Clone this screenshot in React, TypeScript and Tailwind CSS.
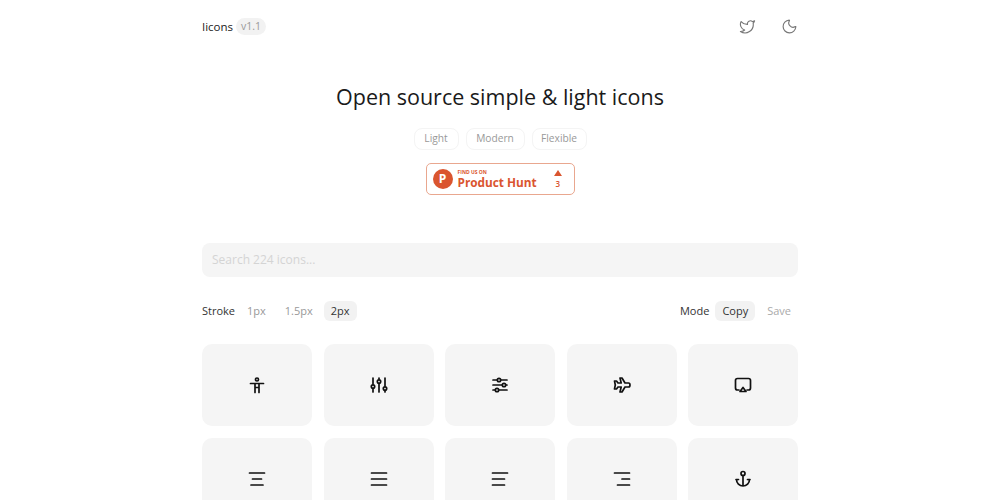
import { Moon, Twitter } from "lucide-react";
import type { ReactNode } from "react";

const icons: ReactNode[] = [
  <>
    <circle cx="12" cy="6.5" r="1.5" />
    <path d="M5.5 10.5h13M10 10.5V19.5M14 10.5V19.5M10 14.5h4" />
  </>,
  <>
    <path d="M6 5v6M6 16v3M12 5v1M12 11v8M18 5v8M18 18v1" />
    <circle cx="6" cy="13.5" r="1.7" />
    <circle cx="12" cy="8.5" r="1.7" />
    <circle cx="18" cy="15.5" r="1.7" />
  </>,
  <>
    <path d="M5 7h4M13 7h6M5 12h9M18 12h1M5 17h2M11 17h8" />
    <circle cx="11" cy="7" r="1.7" />
    <circle cx="16" cy="12" r="1.7" />
    <circle cx="9" cy="17" r="1.7" />
  </>,
  <path d="M10 5h2l3 5h3.5a1.5 2 0 0 1 0 4H15l-3 5h-2l1.2-5H8l-1.5 2H4.5l.8-4-.8-4h2L8 10h3.2z" />,
  <>
    <path d="M8 17H6.5A2 2 0 0 1 4.5 15V7.5a2 2 0 0 1 2-2h11a2 2 0 0 1 2 2V15a2 2 0 0 1-2 2H16" />
    <path d="M12 14.5l3 4H9z" />
  </>,
  <path d="M4.5 6h15M7.5 12h9M6 18h12" />,
  <path d="M4.5 6h15M4.5 12h15M4.5 18h15" />,
  <path d="M4.5 6h15M4.5 12h12M4.5 18h12" />,
  <path d="M4.5 6h15M12 12h7.5M7.5 18h12" />,
  <>
    <circle cx="12" cy="6.5" r="2" />
    <path d="M12 8.5V19M5 12.5H7.5M16.5 12.5H19M5.5 12.5a6.5 6.5 0 0 0 13 0" />
  </>,
];

function Pill({ w, children }: { w: string; children: ReactNode }) {
  return (
    <span className={`flex h-[22px] items-center justify-center rounded-lg border border-[#f4f4f4] text-[10.2px] text-[#999] ${w}`}>
      {children}
    </span>
  );
}

export default function App() {
  return (
    <div className="h-[500px] overflow-hidden bg-white font-['Open_Sans',sans-serif]">
      <div className="mx-auto flex w-[596px] flex-col">
        <header className="flex h-[53px] items-center justify-between">
          <div className="flex items-center gap-[3px]">
            <span className="text-[11.5px] text-[#222]">Iicons</span>
            <span className="rounded-full bg-[#f2f2f2] px-[5px] py-[1px] text-[10.5px] text-[#999]">v1.1</span>
          </div>
          <div className="flex items-center gap-[25px] text-[#777]">
            <Twitter size={17} strokeWidth={1.6} />
            <Moon size={17} strokeWidth={1.6} />
          </div>
        </header>

        <h1 className="mt-[29px] text-center text-[21.5px] leading-[30px] font-normal text-[#1a1a1a]">
          Open source simple &amp; light icons
        </h1>

        <div className="mt-[16px] flex justify-center gap-[7px]">
          <Pill w="w-[45px]">Light</Pill>
          <Pill w="w-[59px]">Modern</Pill>
          <Pill w="w-[55px]">Flexible</Pill>
        </div>

        <div className="mt-[13px] flex justify-center">
          <div className="flex h-[32px] w-[149px] items-center rounded-[5px] border border-[#e9a78f] pl-[6px] text-[#da552f]">
            <span className="flex h-[20px] w-[20px] items-center justify-center rounded-full bg-[#da552f] text-[12px] font-bold text-white">
              P
            </span>
            <div className="ml-[5px] flex flex-col leading-none">
              <span className="text-[5px] font-bold">FIND US ON</span>
              <span className="mt-[2px] text-[11.8px] font-bold">Product Hunt</span>
            </div>
            <div className="ml-[17px] flex flex-col items-center leading-none">
              <span className="h-0 w-0 border-x-[4px] border-b-[6px] border-x-transparent border-b-[#da552f]" />
              <span className="mt-[4px] text-[8px] font-semibold">3</span>
            </div>
          </div>
        </div>

        <div className="mt-[48px] flex h-[34px] items-center rounded-lg bg-[#f5f5f5] px-[10px] text-[12px] text-[#d4d4d4]">
          Search 224 icons...
        </div>

        <div className="mt-[24px] flex h-[20px] items-center justify-between text-[11px]">
          <div className="flex items-center">
            <span className="mr-[4px] text-[#333]">Stroke</span>
            <span className="px-[8px] text-[#999]">1px</span>
            <span className="ml-[3px] px-[8px] text-[#999]">1.5px</span>
            <span className="ml-[3px] flex h-[20px] items-center rounded-md bg-[#f2f2f2] px-[7px] text-[#333]">2px</span>
          </div>
          <div className="flex items-center">
            <span className="mr-[6px] text-[#333]">Mode</span>
            <span className="flex h-[20px] items-center rounded-md bg-[#f2f2f2] px-[7px] text-[#333]">Copy</span>
            <span className="ml-[5px] px-[7px] text-[#aaa]">Save</span>
          </div>
        </div>

        <div className="mt-[23px] grid grid-cols-5 gap-x-[11.5px] gap-y-[12px]">
          {icons.map((icon, i) => (
            <div key={i} className="flex h-[82px] items-center justify-center rounded-[10px] bg-[#f5f5f5]">
              <svg
                width="24"
                height="24"
                viewBox="0 0 24 24"
                fill="none"
                stroke="#111"
                strokeWidth="1.7"
                strokeLinecap="round"
                strokeLinejoin="round"
              >
                {icon}
              </svg>
            </div>
          ))}
        </div>
      </div>
    </div>
  );
}
